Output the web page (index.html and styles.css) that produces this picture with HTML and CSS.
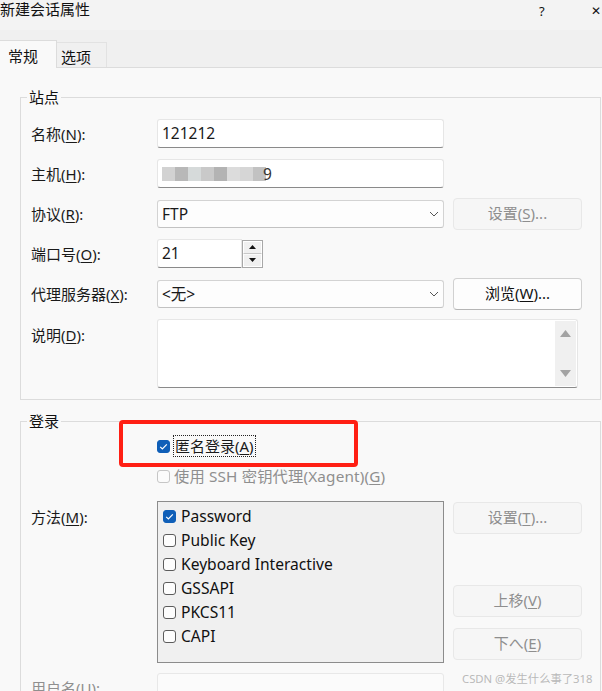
FILE: index.html
```html
<!DOCTYPE html>
<html lang="zh-CN">
<head>
<meta charset="utf-8">
<title>新建会话属性</title>
<link rel="stylesheet" href="styles.css">
</head>
<body>
<div class="window">
  <div class="titlebar">
    <span class="title">新建会话属性</span>
    <span class="tb-help">?</span>
    <span class="tb-close">✕</span>
  </div>
  <div class="tabstrip">
    <div class="tab active">常规</div>
    <div class="tab">选项</div>
  </div>
  <div class="panel">
    <fieldset class="group site">
      <legend>站点</legend>
      <div class="row">
        <span class="lbl">名称(<u>N</u>):</span>
        <div class="input">121212</div>
      </div>
      <div class="row">
        <span class="lbl">主机(<u>H</u>):</span>
        <div class="input host">
          <span class="mosaic">
            <i class="m1"></i><i class="m2"></i><i class="m3"></i><i class="m4"></i><i class="m5"></i><i class="m6"></i><i class="m7"></i><i class="m8"></i>
          </span><span class="tail">9</span>
        </div>
      </div>
      <div class="row">
        <span class="lbl">协议(<u>R</u>):</span>
        <div class="select">FTP<svg class="chev" width="10" height="6" viewBox="0 0 10 6"><path d="M1 1 L5 5 L9 1" fill="none" stroke="#555" stroke-width="1"/></svg></div>
        <div class="btn disabled">设置(<u>S</u>)...</div>
      </div>
      <div class="row">
        <span class="lbl">端口号(<u>O</u>):</span>
        <div class="input port">21</div>
        <div class="spin">
          <div class="spin-btn"><svg width="7" height="4" viewBox="0 0 7 4"><path d="M0 4 L3.5 0 L7 4 Z" fill="#111"/></svg></div>
          <div class="spin-btn"><svg width="7" height="4" viewBox="0 0 7 4"><path d="M0 0 L3.5 4 L7 0 Z" fill="#111"/></svg></div>
        </div>
      </div>
      <div class="row">
        <span class="lbl">代理服务器(<u>X</u>):</span>
        <div class="select">&lt;无&gt;<svg class="chev" width="10" height="6" viewBox="0 0 10 6"><path d="M1 1 L5 5 L9 1" fill="none" stroke="#555" stroke-width="1"/></svg></div>
        <div class="btn">浏览(<u>W</u>)...</div>
      </div>
      <div class="row tall">
        <span class="lbl top">说明(<u>D</u>):</span>
        <div class="textarea">
          <div class="vscroll">
            <svg width="11" height="7" viewBox="0 0 11 7"><path d="M0 7 L5.5 0 L11 7 Z" fill="#a3a3a3"/></svg>
            <svg width="11" height="7" viewBox="0 0 11 7"><path d="M0 0 L5.5 7 L11 0 Z" fill="#a3a3a3"/></svg>
          </div>
        </div>
      </div>
    </fieldset>

    <fieldset class="group login">
      <legend>登录</legend>
      <div class="crow first">
        <span class="cb checked"><svg width="13" height="13" viewBox="0 0 13 13"><path d="M3.2 6.8 L5.4 9 L9.8 4.4" fill="none" stroke="#fff" stroke-width="1.2"/></svg></span>
        <span class="focus">匿名登录(<u>A</u>)</span>
      </div>
      <div class="crow second dim">
        <span class="cb off"></span>
        <span class="ctext">使用 SSH 密钥代理(Xagent)(<u>G</u>)</span>
      </div>
      <div class="mrow">
        <span class="lbl top2">方法(<u>M</u>):</span>
        <div class="listbox">
          <div class="item"><span class="cb checked"><svg width="13" height="13" viewBox="0 0 13 13"><path d="M3.2 6.8 L5.4 9 L9.8 4.4" fill="none" stroke="#fff" stroke-width="1.2"/></svg></span>Password</div>
          <div class="item"><span class="cb"></span>Public Key</div>
          <div class="item"><span class="cb"></span>Keyboard Interactive</div>
          <div class="item"><span class="cb"></span>GSSAPI</div>
          <div class="item"><span class="cb"></span>PKCS11</div>
          <div class="item"><span class="cb"></span>CAPI</div>
        </div>
        <div class="btncol">
          <div class="btn disabled">设置(<u>T</u>)...</div>
          <div class="btn disabled up">上移(<u>V</u>)</div>
          <div class="btn disabled down">下へ(<u>E</u>)</div>
        </div>
      </div>
      <div class="row user">
        <span class="lbl dim">用户名(<u>U</u>):</span>
        <div class="input disabled"></div>
      </div>
    </fieldset>
  </div>

  <div class="annot"></div>
  <div class="watermark">CSDN @发生什么事了318</div>
</div>
</body>
</html>
```

FILE: styles.css
```css
* { box-sizing: border-box; }

html, body {
  margin: 0;
  padding: 0;
  width: 602px;
  height: 691px;
  overflow: hidden;
  background: #f9f9f9;
}

body {
  font-family: "Noto Sans", "Noto Sans CJK SC", sans-serif;
  font-size: 15px;
  line-height: 20px;
  color: #1a1a1a;
}

.window {
  position: relative;
  width: 602px;
  height: 691px;
  overflow: hidden;
}

u { text-decoration-thickness: 1px; text-underline-offset: 2px; }

/* title bar */
.titlebar {
  height: 30px;
  background: #f3f3f3;
  display: flex;
  align-items: flex-start;
  position: relative;
}
.title {
  margin-top: -1px;
  font-size: 15px;
  line-height: 20px;
  color: #111;
}
.tb-help {
  position: absolute;
  left: 539px;
  top: 2px;
  font-size: 13px;
  line-height: 18px;
  color: #111;
}
.tb-close {
  position: absolute;
  left: 591px;
  top: 2px;
  font-size: 12px;
  line-height: 18px;
  color: #111;
}

/* tabs */
.tabstrip {
  height: 37px;
  background: #f0f0f0;
  display: flex;
  align-items: flex-end;
}
.tab {
  width: 50px;
  height: 25px;
  padding-left: 4px;
  line-height: 22px;
  padding-top: 3px;
  background: #f0f0f0;
  border-top: 1px solid #e2e2e2;
  border-right: 1px solid #e2e2e2;
  color: #111;
}
.tab.active {
  width: 57px;
  height: 28px;
  margin-bottom: -1px;
  padding-left: 8px;
  padding-top: 5px;
  line-height: 20px;
  background: #f9f9f9;
  border-top: 1px solid #dcdcdc;
  border-right: 1px solid #dcdcdc;
  position: relative;
  z-index: 1;
}

/* panel */
.panel {
  background: #f9f9f9;
  border-top: 1px solid #dcdcdc;
}

.group {
  border: 1px solid #dcdcdc;
  margin: 19px 1px 0 20px;
  padding: 12px 0 11px 10px;
  min-width: 0;
}
.group legend {
  padding: 0 2px;
  margin-left: -4px;
  line-height: 20px;
  color: #111;
}
.group.login {
  margin-top: 11px;
  padding: 4px 0 0 10px;
  height: 290px;
}

.row {
  display: flex;
  align-items: center;
  height: 29px;
  margin-bottom: 11px;
}
.row.tall {
  height: 69px;
  align-items: flex-start;
  margin-bottom: 0;
}
.lbl {
  width: 126px;
  flex-shrink: 0;
  white-space: nowrap;
}
.lbl.top { padding-top: 6px; }
.lbl.top2 { padding-top: 6px; }
.dim, .lbl.dim { color: #8f8f8f; }

.input {
  width: 287px;
  height: 29px;
  background: #fff;
  border: 1px solid #e6e6e6;
  border-bottom-color: #8a8a8a;
  border-radius: 3px;
  padding-left: 4px;
  line-height: 26px;
  white-space: nowrap;
  font-size: 15.5px;
}
.input.port {
  width: 85px;
  border-top-right-radius: 0;
  border-bottom-right-radius: 0;
}
.input.disabled {
  background: #fbfbfb;
  border-color: #e8e8e8;
}
.input.host { display: flex; align-items: center; }
.mosaic { display: flex; height: 14px; }
.mosaic i { display: block; width: 13px; height: 14px; }
.m1 { background: #d2d2d2; }
.m2 { background: #b8b8b8; width: 14px; }
.m3 { background: #d6dada; }
.m4 { background: #c9c9c9; }
.m5 { background: #b3b3b3; }
.m6 { background: #dcdcdc; }
.m7 { background: #d6d6d6; }
.m8 { background: #c2c2c2; width: 12px; }
.tail { margin-left: -3px; color: #333; }

.spin {
  width: 21px;
  height: 28px;
  border: 1px solid #a8a8a8;
  display: flex;
  flex-direction: column;
  background: #f3f3f3;
}
.spin-btn {
  flex: 1;
  display: flex;
  align-items: center;
  justify-content: center;
  border: 1px solid #fff;
  border-bottom-color: #c8c8c8;
  background: #f0f0f0;
}
.spin-btn + .spin-btn { border-bottom-color: #fff; border-top-color: #fafafa; }

.select {
  width: 287px;
  height: 28px;
  background: #fdfdfd;
  border: 1px solid #d3d3d3;
  border-bottom-color: #c2c2c2;
  border-radius: 3px;
  padding-left: 4px;
  line-height: 26px;
  display: flex;
  align-items: center;
  justify-content: space-between;
  padding-right: 4px;
  font-size: 15.5px;
}
.chev { margin-top: 1px; }

.btn {
  width: 129px;
  height: 32px;
  margin-left: 9px;
  flex-shrink: 0;
  border: 1px solid #d1d1d1;
  border-bottom-color: #b5b5b5;
  border-radius: 4px;
  background: #fdfdfd;
  text-align: center;
  line-height: 29px;
  color: #111;
}
.btn.disabled {
  background: #f6f6f6;
  border-color: #e8e8e8;
  color: #8e8e8e;
}

.textarea {
  width: 421px;
  height: 69px;
  background: #fff;
  border: 1px solid #e6e6e6;
  border-bottom-color: #8a8a8a;
  border-radius: 3px;
  display: flex;
  justify-content: flex-end;
  padding: 1px 1px 1px 0;
}
.vscroll {
  width: 21px;
  background: #f0f0f0;
  display: flex;
  flex-direction: column;
  justify-content: space-between;
  align-items: center;
  padding: 9px 0 9px;
}

/* login group */
.crow {
  display: flex;
  align-items: center;
  height: 22px;
  padding-left: 126px;
}
.crow.second { margin-top: 8px; }
.cb {
  width: 13px;
  height: 13px;
  flex-shrink: 0;
  border: 1px solid #5c5c5c;
  border-radius: 3px;
  background: #fdfdfd;
  display: block;
}
.cb svg { display: block; margin: -1px; }
.cb.checked {
  background: #0f5fb8;
  border-color: #0f5fb8;
}
.cb.off {
  border-color: #c6c6c6;
  background: #fbfbfb;
}
.focus {
  margin-left: 3px;
  height: 22px;
  width: 83px;
  border: 1px dotted #222;
  padding-left: 1px;
  line-height: 20px;
  white-space: nowrap;
}
.ctext { margin-left: 4px; white-space: nowrap; font-size: 15.3px; letter-spacing: 0.15px; }

.mrow {
  display: flex;
  align-items: flex-start;
  margin-top: 14px;
}
.listbox {
  width: 287px;
  height: 162px;
  flex-shrink: 0;
  background: #f0f0f0;
  border: 1px solid #8c8c8c;
  padding: 2px 0 0 5px;
}
.item {
  height: 24px;
  display: flex;
  align-items: center;
  gap: 5px;
  line-height: 24px;
  color: #111;
  white-space: nowrap;
  font-size: 15.6px;
}
.btncol {
  height: 162px;
  display: flex;
  flex-direction: column;
  padding: 1px 0 3px;
}
.btncol .btn.up { margin-top: auto; }
.btncol .btn.down { margin-top: 11px; }

.row.user { margin-top: 10px; }

/* overlays */
.annot {
  position: absolute;
  left: 119px;
  top: 420px;
  width: 239px;
  height: 47px;
  border: 4px solid #ff1f14;
  border-radius: 4px;
}
.watermark {
  position: absolute;
  left: 462px;
  top: 671px;
  font-size: 11.3px;
  line-height: 15px;
  color: #b9b9b9;
  white-space: nowrap;
}
```
